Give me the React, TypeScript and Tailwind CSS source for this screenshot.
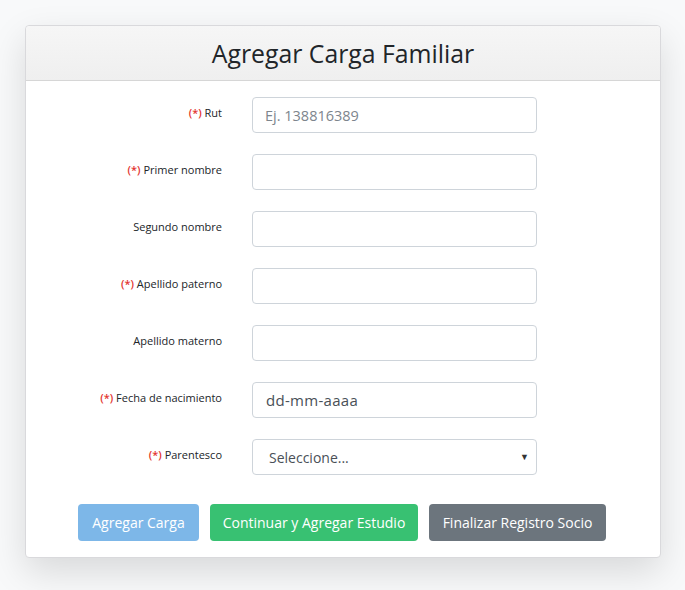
import React from "react";

const fields = [
  { label: "Rut", required: true, placeholder: "Ej. 138816389" },
  { label: "Primer nombre", required: true },
  { label: "Segundo nombre", required: false },
  { label: "Apellido paterno", required: true },
  { label: "Apellido materno", required: false },
];

function Label({ text, required }: { text: string; required: boolean }) {
  return (
    <label className="text-right text-[11px] text-[#212529] pt-[10px] leading-none">
      {required && <span className="text-[#e3342f] font-semibold">(*) </span>}
      {text}
    </label>
  );
}

export default function App() {
  return (
    <div className="min-h-[590px] bg-[#f8f9fa] pt-[25px] pl-[25px] font-['Open_Sans',sans-serif]">
      <div className="w-[636px] bg-white border border-[#d9d9dc] rounded-[4px] shadow-[0_14px_36px_rgba(0,0,0,0.13)]">
        {/* Header */}
        <div className="h-[55px] bg-gradient-to-b from-[#f6f6f6] to-[#efefef] border-b border-[#d6d6d6] rounded-t-[4px] flex items-center justify-center">
          <h1 className="text-[24.8px] text-[#212529] font-normal leading-none">Agregar Carga Familiar</h1>
        </div>

        {/* Body */}
        <div className="pt-[16px] pb-[16px]">
          <div className="grid grid-cols-[196px_285px] gap-x-[30px] gap-y-[21px]">
            {fields.map((f) => (
              <React.Fragment key={f.label}>
                <Label text={f.label} required={f.required} />
                <input
                  type="text"
                  placeholder={f.placeholder}
                  className="h-[36px] w-[285px] border border-[#ced4da] rounded-[4px] px-3 text-[14.5px] placeholder-[#7d858d] outline-none"
                />
              </React.Fragment>
            ))}
            <Label text="Fecha de nacimiento" required />
            <div className="h-[36px] w-[285px] border border-[#ced4da] rounded-[4px] px-[13px] flex items-center text-[15px] text-[#495057] tracking-[0.3px]">
              dd-mm-aaaa
            </div>
            <Label text="Parentesco" required />
            <div className="h-[36px] w-[285px] border border-[#ced4da] rounded-[4px] pl-4 pr-[7px] flex items-center justify-between text-[14px] text-[#495057]">
              <span>Seleccione...</span>
              <span className="text-[9px] text-[#333]">▼</span>
            </div>
          </div>

          {/* Buttons */}
          <div className="flex gap-[11px] mt-[29px] pl-[52px] text-[14px] text-white">
            <button className="h-[37px] w-[121px] rounded-[4px] bg-[#7db7e8]">Agregar Carga</button>
            <button className="h-[37px] w-[208px] rounded-[4px] bg-[#38c172]">Continuar y Agregar Estudio</button>
            <button className="h-[37px] w-[177px] rounded-[4px] bg-[#6c757d]">Finalizar Registro Socio</button>
          </div>
        </div>
      </div>
    </div>
  );
}
